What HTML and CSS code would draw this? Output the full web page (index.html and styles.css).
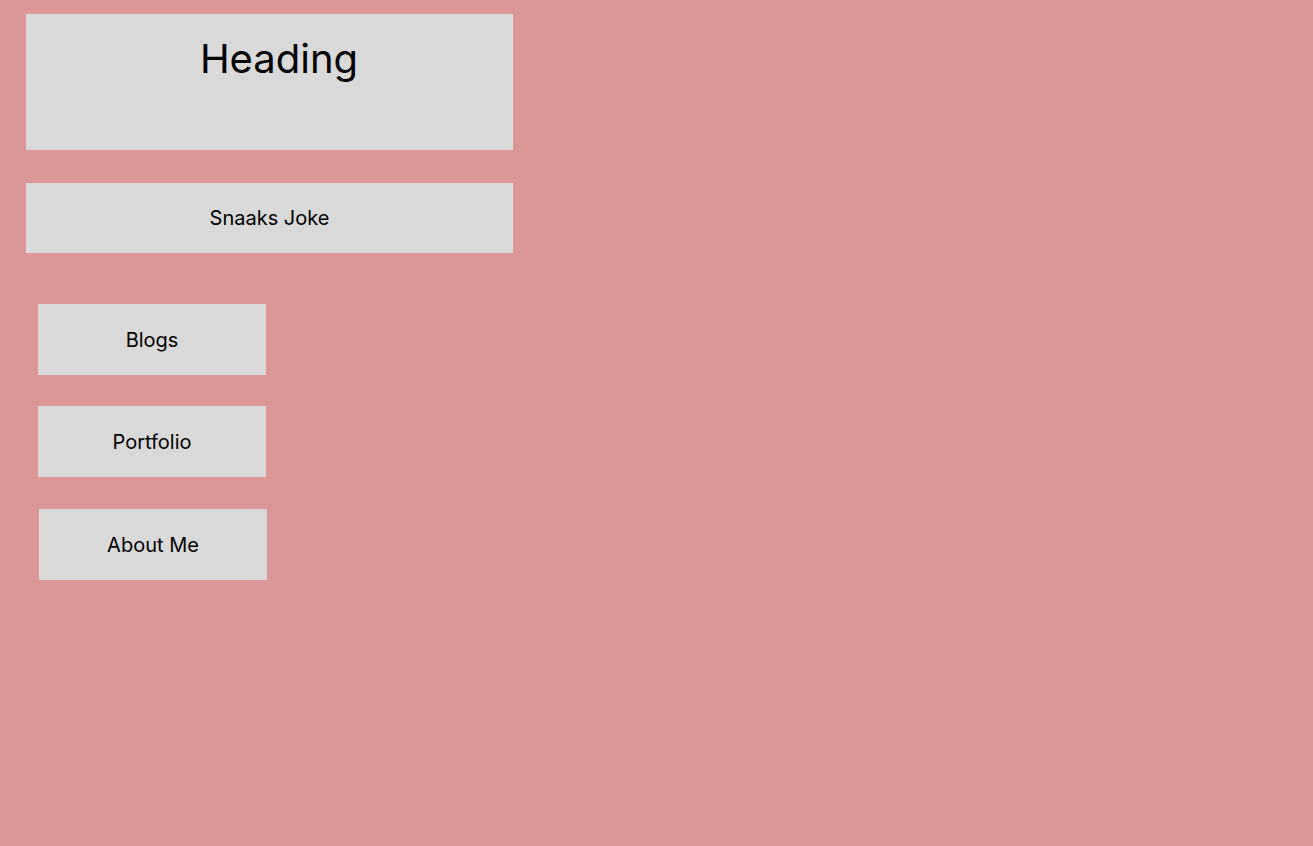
FILE: index.html
```html
<!DOCTYPE html>
<html lang="en">
<head>
<meta charset="utf-8">
<title>Home</title>
<link rel="stylesheet" href="styles.css">
</head>
<body>
  <main class="page">
    <header class="heading-box">
      <h1 class="heading">Heading</h1>
    </header>
    <div class="joke-box">Snaaks Joke</div>
    <nav class="nav">
      <a class="nav-item" href="#">Blogs</a>
      <a class="nav-item" href="#">Portfolio</a>
      <a class="nav-item nav-item--shift" href="#">About Me</a>
    </nav>
  </main>
</body>
</html>
```

FILE: styles.css
```css
html, body {
  margin: 0;
  padding: 0;
  height: 100%;
}

body {
  background: #db9798;
  font-family: Inter, "Noto Sans", sans-serif;
  color: #000;
}

.page {
  display: flex;
  flex-direction: column;
  align-items: flex-start;
  padding: 14px 0 0 26px;
}

.heading-box {
  width: 487px;
  height: 136px;
  background: #d9d9d9;
  box-sizing: border-box;
  padding: 21px 0 0 19px;
  display: flex;
  justify-content: center;
  align-items: flex-start;
}

.heading {
  margin: 0;
  font-size: 40px;
  font-weight: 400;
  line-height: 1.21;
}

.joke-box {
  margin-top: 33px;
  width: 487px;
  height: 70px;
  background: #d9d9d9;
  display: flex;
  justify-content: center;
  align-items: center;
  font-size: 20px;
}

.nav {
  margin-top: 51px;
  margin-left: 12px;
  display: flex;
  flex-direction: column;
  gap: 31px;
}

.nav-item {
  width: 228px;
  height: 71px;
  background: #d9d9d9;
  display: flex;
  justify-content: center;
  align-items: center;
  font-size: 20px;
  color: #000;
  text-decoration: none;
}

.nav-item--shift {
  margin-top: 1px;
  margin-left: 1px;
}
```
